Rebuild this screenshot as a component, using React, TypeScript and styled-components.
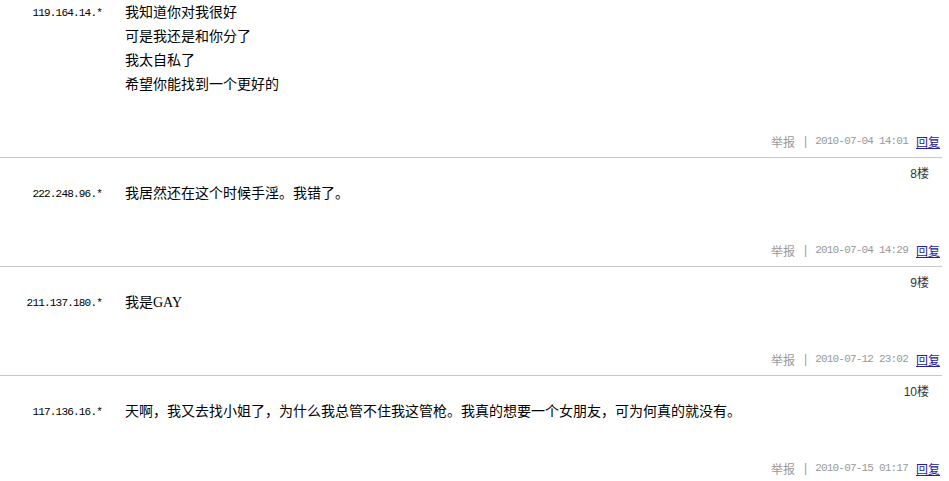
import React from "react";
import styled, { createGlobalStyle } from "styled-components";

const Global = createGlobalStyle`
  html, body { margin: 0; padding: 0; background: #fff; }
  body { font-family: "Liberation Serif", "Noto Sans CJK SC", serif; color: #000; }
`;

const List = styled.div`
  width: 942px;
  padding-top: 1px;
`;

const Post = styled.div<{ $first?: boolean }>`
  border-top: ${(p) => (p.$first ? "none" : "1px solid #c8c8c8")};
  padding-bottom: 4px;
`;

const Floor = styled.div`
  height: 24px;
  box-sizing: border-box;
  padding: 9px 13px 0 0;
  text-align: right;
  font-size: 12px;
  line-height: 14px;
  color: #333;
  font-family: "Liberation Sans", "Noto Sans CJK SC", sans-serif;
`;

const Body = styled.div`
  display: flex;
  align-items: flex-start;
  gap: 23px;
  padding-bottom: 32px;
`;

const Ip = styled.div`
  width: 102px;
  flex: none;
  text-align: right;
  font-family: "Liberation Mono", monospace;
  font-size: 11px;
  letter-spacing: -0.8px;
  line-height: 24px;
  color: #000;
`;

const Content = styled.div`
  font-size: 14px;
  line-height: 24px;
  color: #000;
`;

const Line = styled.div``;

const Footer = styled.div`
  display: flex;
  justify-content: flex-end;
  align-items: center;
  height: 24px;
  padding-right: 2px;
  font-size: 12px;
  color: #999;
  font-family: "Noto Sans CJK SC", sans-serif;
`;

const Sep = styled.span`
  margin: 0 8px 0 9px;
  font-family: "Liberation Sans", sans-serif;
`;

const Mono = styled.span`
  font-family: "Liberation Mono", monospace;
  font-size: 11px;
  letter-spacing: -0.8px;
`;

const Reply = styled.a`
  margin-left: 8px;
  color: #22229e;
  text-decoration: underline;
  cursor: pointer;
`;

type PostData = {
  floor?: string;
  ip: string;
  lines: string[];
  time: string;
};

const posts: PostData[] = [
  {
    ip: "119.164.14.*",
    lines: ["我知道你对我很好", "可是我还是和你分了", "我太自私了", "希望你能找到一个更好的"],
    time: "2010-07-04 14:01",
  },
  { floor: "8", ip: "222.248.96.*", lines: ["我居然还在这个时候手淫。我错了。"], time: "2010-07-04 14:29" },
  { floor: "9", ip: "211.137.180.*", lines: ["我是GAY"], time: "2010-07-12 23:02" },
  {
    floor: "10",
    ip: "117.136.16.*",
    lines: ["天啊，我又去找小姐了，为什么我总管不住我这管枪。我真的想要一个女朋友，可为何真的就没有。"],
    time: "2010-07-15 01:17",
  },
];

export default function App() {
  return (
    <>
      <Global />
      <List>
        {posts.map((p, i) => (
          <Post key={i} $first={i === 0}>
            {p.floor && <Floor>{p.floor}楼</Floor>}
            <Body>
              <Ip>{p.ip}</Ip>
              <Content>
                {p.lines.map((l, j) => (
                  <Line key={j}>{l}</Line>
                ))}
              </Content>
            </Body>
            <Footer>
              <span>举报</span>
              <Sep>|</Sep>
              <Mono>{p.time}</Mono>
              <Reply>回复</Reply>
            </Footer>
          </Post>
        ))}
      </List>
    </>
  );
}
